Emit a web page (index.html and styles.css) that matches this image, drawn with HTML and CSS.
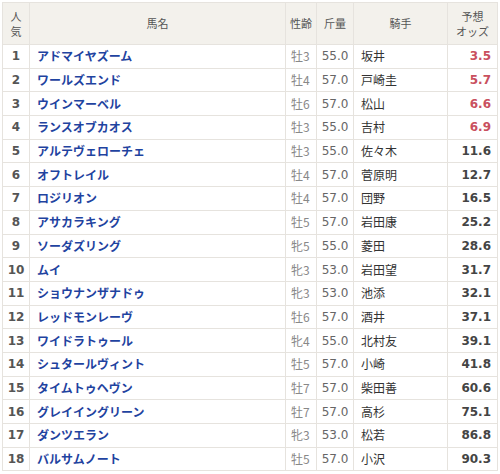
FILE: index.html
```html
<!DOCTYPE html>
<html lang="ja">
<head>
<meta charset="utf-8">
<link rel="stylesheet" href="styles.css">
</head>
<body>
<table class="odds">
  <colgroup>
    <col class="c-rank"><col class="c-name"><col class="c-sex"><col class="c-wt"><col class="c-jk"><col class="c-odds">
  </colgroup>
  <thead>
    <tr>
      <th>人<br>気</th>
      <th>馬名</th>
      <th>性齢</th>
      <th>斤量</th>
      <th>騎手</th>
      <th>予想<br>オッズ</th>
    </tr>
  </thead>
  <tbody>
    <tr><td class="rank">1</td><td class="name">アドマイヤズーム</td><td class="sex">牡3</td><td class="wt">55.0</td><td class="jk">坂井</td><td class="od hot">3.5</td></tr>
    <tr><td class="rank">2</td><td class="name">ワールズエンド</td><td class="sex">牡4</td><td class="wt">57.0</td><td class="jk">戸崎圭</td><td class="od hot">5.7</td></tr>
    <tr><td class="rank">3</td><td class="name">ウインマーベル</td><td class="sex">牡6</td><td class="wt">57.0</td><td class="jk">松山</td><td class="od hot">6.6</td></tr>
    <tr><td class="rank">4</td><td class="name">ランスオブカオス</td><td class="sex">牡3</td><td class="wt">55.0</td><td class="jk">吉村</td><td class="od hot">6.9</td></tr>
    <tr><td class="rank">5</td><td class="name">アルテヴェローチェ</td><td class="sex">牡3</td><td class="wt">55.0</td><td class="jk">佐々木</td><td class="od">11.6</td></tr>
    <tr><td class="rank">6</td><td class="name">オフトレイル</td><td class="sex">牡4</td><td class="wt">57.0</td><td class="jk">菅原明</td><td class="od">12.7</td></tr>
    <tr><td class="rank">7</td><td class="name">ロジリオン</td><td class="sex">牡4</td><td class="wt">57.0</td><td class="jk">団野</td><td class="od">16.5</td></tr>
    <tr><td class="rank">8</td><td class="name">アサカラキング</td><td class="sex">牡5</td><td class="wt">57.0</td><td class="jk">岩田康</td><td class="od">25.2</td></tr>
    <tr><td class="rank">9</td><td class="name">ソーダズリング</td><td class="sex">牝5</td><td class="wt">55.0</td><td class="jk">菱田</td><td class="od">28.6</td></tr>
    <tr><td class="rank">10</td><td class="name">ムイ</td><td class="sex">牝3</td><td class="wt">53.0</td><td class="jk">岩田望</td><td class="od">31.7</td></tr>
    <tr><td class="rank">11</td><td class="name">ショウナンザナドゥ</td><td class="sex">牝3</td><td class="wt">53.0</td><td class="jk">池添</td><td class="od">32.1</td></tr>
    <tr><td class="rank">12</td><td class="name">レッドモンレーヴ</td><td class="sex">牡6</td><td class="wt">57.0</td><td class="jk">酒井</td><td class="od">37.1</td></tr>
    <tr><td class="rank">13</td><td class="name">ワイドラトゥール</td><td class="sex">牝4</td><td class="wt">55.0</td><td class="jk">北村友</td><td class="od">39.1</td></tr>
    <tr><td class="rank">14</td><td class="name">シュタールヴィント</td><td class="sex">牡5</td><td class="wt">57.0</td><td class="jk">小崎</td><td class="od">41.8</td></tr>
    <tr><td class="rank">15</td><td class="name">タイムトゥヘヴン</td><td class="sex">牡7</td><td class="wt">57.0</td><td class="jk">柴田善</td><td class="od">60.6</td></tr>
    <tr><td class="rank">16</td><td class="name">グレイイングリーン</td><td class="sex">牡7</td><td class="wt">57.0</td><td class="jk">高杉</td><td class="od">75.1</td></tr>
    <tr><td class="rank">17</td><td class="name">ダンツエラン</td><td class="sex">牝3</td><td class="wt">53.0</td><td class="jk">松若</td><td class="od">86.8</td></tr>
    <tr><td class="rank">18</td><td class="name">バルサムノート</td><td class="sex">牡5</td><td class="wt">57.0</td><td class="jk">小沢</td><td class="od">90.3</td></tr>
  </tbody>
</table>
</body>
</html>
```

FILE: styles.css
```css
html, body {
  margin: 0;
  padding: 0;
  background: #ffffff;
}

body {
  font-family: "DejaVu Sans", "Noto Sans CJK JP", sans-serif;
  color: #333333;
}

.odds {
  margin: 2px 0 0 2px;
  width: 495px;
  border-collapse: collapse;
  table-layout: fixed;
}

.c-rank { width: 27px; }
.c-name { width: 256px; }
.c-sex { width: 31px; }
.c-wt { width: 37px; }
.c-jk { width: 94px; }
.c-odds { width: 50px; }

.odds th,
.odds td {
  border: 1px solid #e6e3de;
  padding: 0;
  overflow: hidden;
  white-space: nowrap;
}

.odds th {
  background: #f3f1ec;
  color: #555555;
  font-family: "Noto Sans CJK JP", sans-serif;
  font-weight: normal;
  font-size: 11px;
  line-height: 15px;
  height: 41px;
  text-align: center;
  vertical-align: middle;
}

.odds td {
  height: 22.7px;
  font-size: 12px;
  line-height: 16px;
  vertical-align: middle;
}

.rank {
  text-align: center;
  font-weight: bold;
  font-size: 11px;
  color: #555555;
}

.name {
  padding-left: 7px !important;
  font-family: "Noto Sans CJK JP", sans-serif;
  font-weight: bold;
  font-size: 12.5px;
  color: #1f43a0;
}

.sex {
  padding-left: 5px !important;
  color: #888888;
  font-family: "Noto Sans CJK JP", sans-serif;
  font-size: 11.5px;
}

.wt {
  text-align: center;
  color: #666666;
  font-size: 11.5px;
}

.jk {
  padding-left: 7px !important;
  font-family: "Noto Sans CJK JP", sans-serif;
  font-size: 11.5px;
  color: #333333;
}

.od {
  text-align: right;
  padding-right: 6px !important;
  font-weight: bold;
  font-size: 12px;
  color: #444444;
}

.od.hot {
  color: #c9505e;
}
```
